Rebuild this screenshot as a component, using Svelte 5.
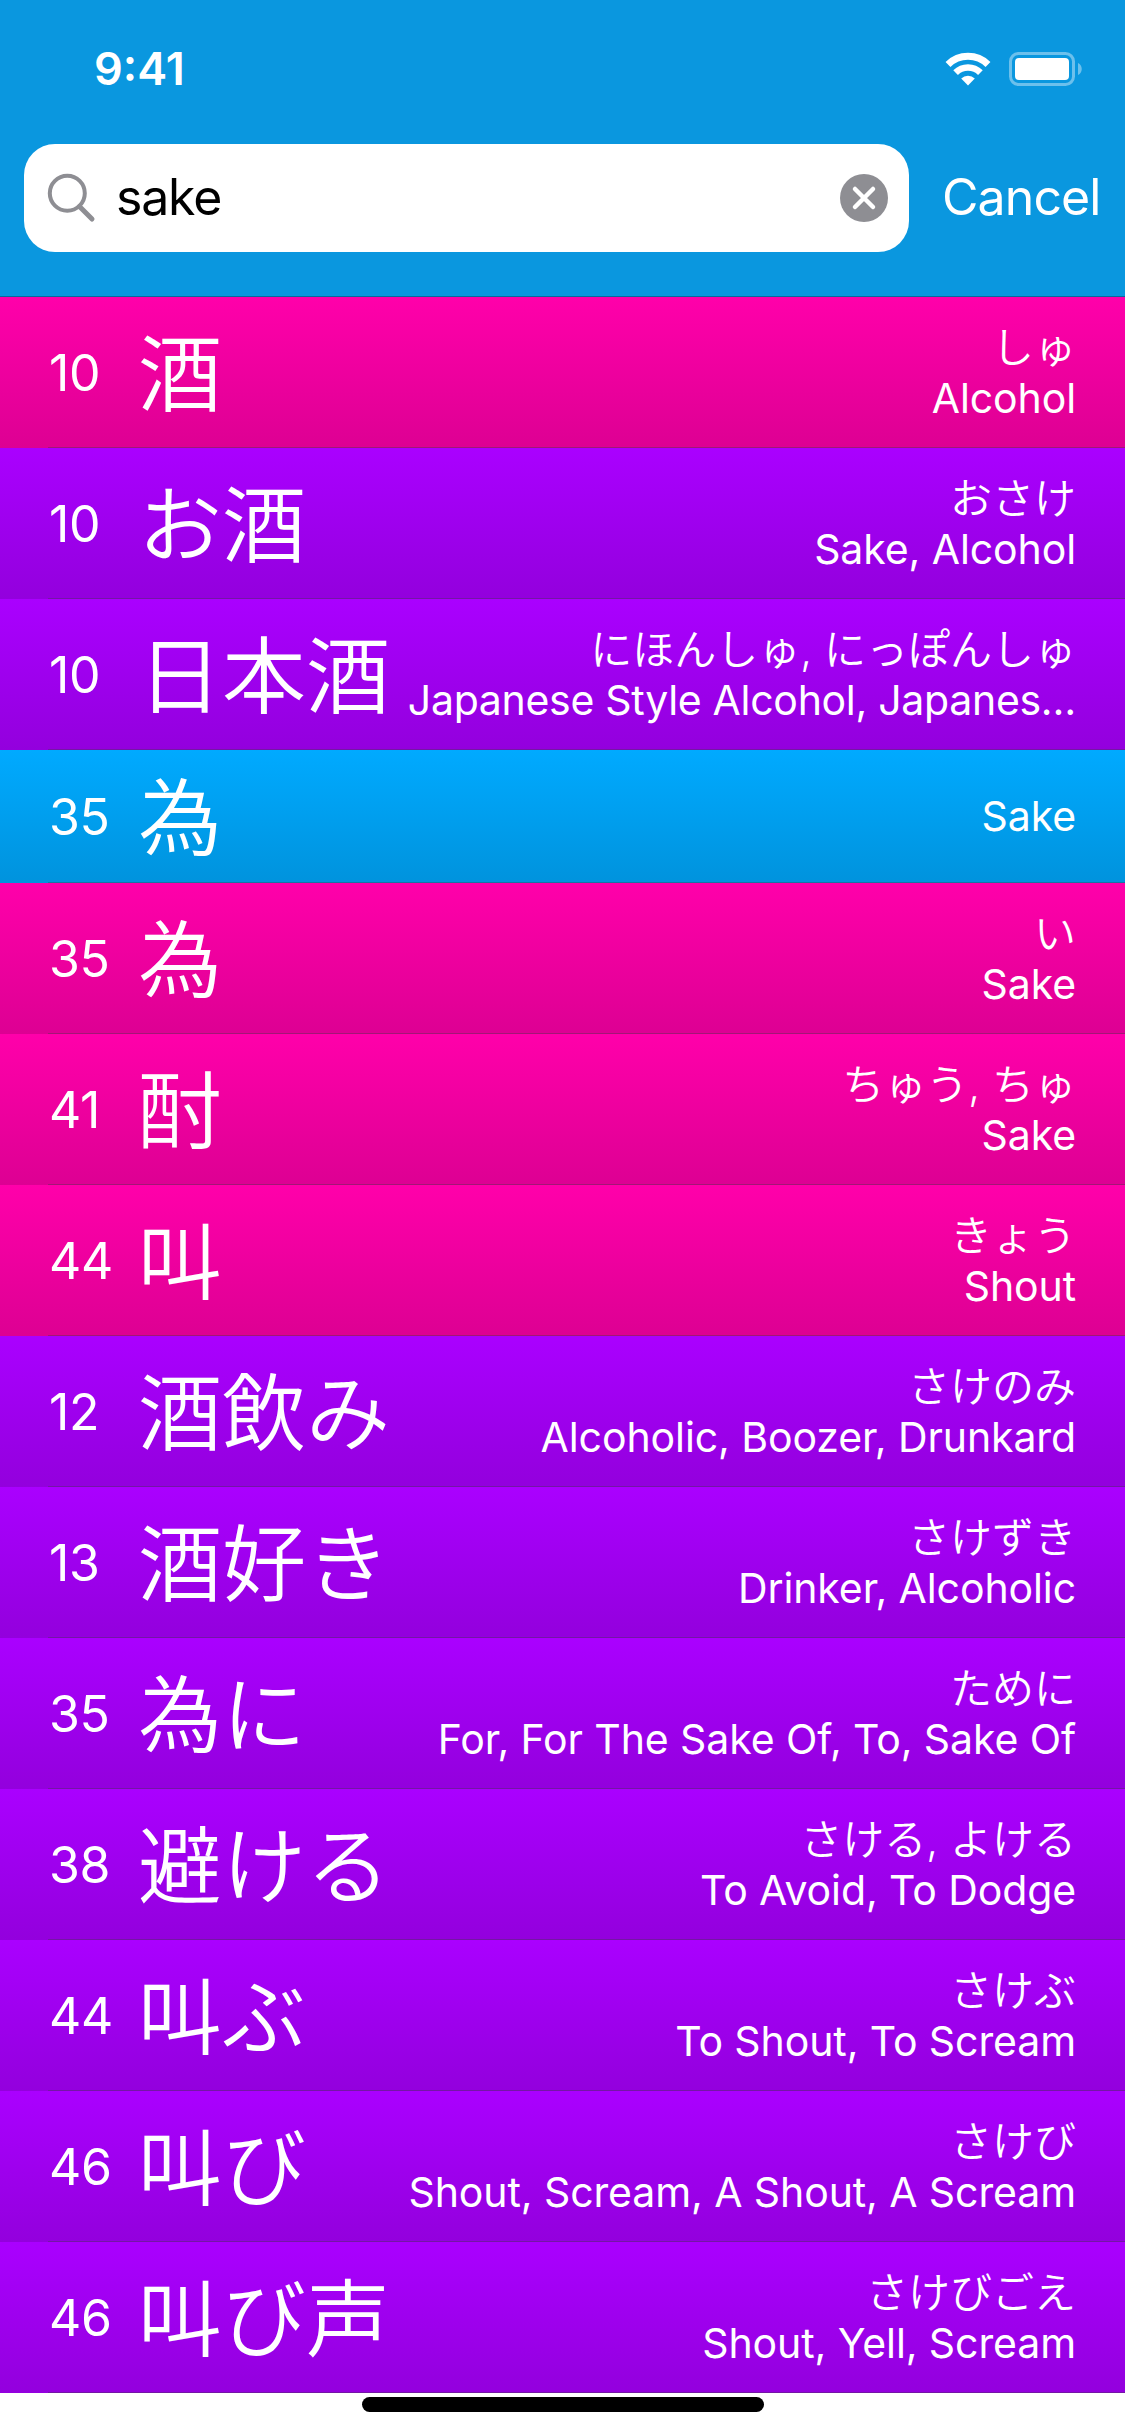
<script>
  const entries = [
    { kind: 'on', strokes: 10, word: '酒', reading: 'しゅ', meaning: 'Alcohol' },
    { kind: 'vocab', strokes: 10, word: 'お酒', reading: 'おさけ', meaning: 'Sake, Alcohol' },
    { kind: 'vocab', strokes: 10, word: '日本酒', reading: 'にほんしゅ, にっぽんしゅ', meaning: 'Japanese Style Alcohol, Japanes…', tight: true },
    { kind: 'radical', strokes: 35, word: '為', reading: '', meaning: 'Sake' },
    { kind: 'on', strokes: 35, word: '為', reading: 'い', meaning: 'Sake' },
    { kind: 'on', strokes: 41, word: '酎', reading: 'ちゅう, ちゅ', meaning: 'Sake' },
    { kind: 'on', strokes: 44, word: '叫', reading: 'きょう', meaning: 'Shout' },
    { kind: 'vocab', strokes: 12, word: '酒飲み', reading: 'さけのみ', meaning: 'Alcoholic, Boozer, Drunkard' },
    { kind: 'vocab', strokes: 13, word: '酒好き', reading: 'さけずき', meaning: 'Drinker, Alcoholic' },
    { kind: 'vocab', strokes: 35, word: '為に', reading: 'ために', meaning: 'For, For The Sake Of, To, Sake Of' },
    { kind: 'vocab', strokes: 38, word: '避ける', reading: 'さける, よける', meaning: 'To Avoid, To Dodge' },
    { kind: 'vocab', strokes: 44, word: '叫ぶ', reading: 'さけぶ', meaning: 'To Shout, To Scream' },
    { kind: 'vocab', strokes: 46, word: '叫び', reading: 'さけび', meaning: 'Shout, Scream, A Shout, A Scream' },
    { kind: 'vocab', strokes: 46, word: '叫び声', reading: 'さけびごえ', meaning: 'Shout, Yell, Scream' },
  ];
</script>

<div class="screen">
  <header>
    <div class="status">
      <span class="time">9:41</span>
      <div class="indicators">
        <svg class="wifi" width="46" height="34" viewBox="0 0 46 34">
          <g fill="none" stroke="#fff">
            <path d="M3 12.4a28.6 28.6 0 0 1 40 0" stroke-width="7" />
            <path d="M10.6 20.6a17.6 17.6 0 0 1 24.8 0" stroke-width="6.6" />
          </g>
          <path d="M23 33.4l-6.8-6.9a9.7 9.7 0 0 1 13.6 0z" fill="#fff" />
        </svg>
        <svg class="battery" width="74" height="34" viewBox="0 0 74 34">
          <rect x="1.5" y="1.5" width="63" height="31" rx="8" fill="none" stroke="#fff" stroke-opacity=".4" stroke-width="3" />
          <rect x="6" y="6" width="54" height="22" rx="4" fill="#fff" />
          <path d="M69 11c5 2 5 10 0 12z" fill="#fff" fill-opacity=".4" />
        </svg>
      </div>
    </div>
    <div class="search">
      <div class="field">
        <svg class="glass" width="50" height="50" viewBox="0 0 50 50" fill="none" stroke="#8e8e93">
          <circle cx="20.3" cy="20.3" r="17.5" stroke-width="4" />
          <path d="M32.5 33.5L45 46" stroke-width="5" stroke-linecap="round" />
        </svg>
        <span class="query">sake</span>
        <svg class="clear" width="48" height="48" viewBox="0 0 48 48">
          <circle cx="24" cy="24" r="24" fill="#8e8e93" />
          <path d="M15 15l18 18M33 15l-18 18" stroke="#fff" stroke-width="4.5" stroke-linecap="round" />
        </svg>
      </div>
      <span class="cancel">Cancel</span>
    </div>
  </header>

  <ul>
    {#each entries as entry}
      <li class={entry.kind}>
        <span class="level">{entry.strokes}</span>
        <span class="word">{entry.word}</span>
        <div class="detail">
          {#if entry.reading}<span class="reading">{entry.reading}</span>{/if}
          <span class="meaning" class:tight={entry.tight}>{entry.meaning}</span>
        </div>
      </li>
    {/each}
  </ul>

  <footer><div class="home"></div></footer>
</div>

<style>
  :global(body) {
    background: #fff;
  }
  .screen {
    width: 1125px;
    height: 2436px;
    overflow: hidden;
    display: flex;
    flex-direction: column;
    color: #fff;
    font-family: Inter, 'Noto Sans CJK JP', sans-serif;
  }
  header {
    box-sizing: border-box;
    height: 297px;
    flex: none;
    background: #0a97df;
    border-bottom: 1px solid #0a6a9c;
  }
  .status {
    height: 144px;
    box-sizing: border-box;
    padding: 52px 42px 0 94px;
    display: flex;
    justify-content: space-between;
    align-items: flex-start;
  }
  .time {
    font-size: 45px;
    line-height: 34px;
    font-weight: 600;
  }
  .indicators {
    display: flex;
    gap: 18px;
  }
  .search {
    display: flex;
    align-items: center;
    padding-left: 24px;
  }
  .field {
    box-sizing: border-box;
    width: 885px;
    height: 108px;
    border-radius: 31px;
    background: #fff;
    display: flex;
    align-items: center;
    padding: 0 21px 0 23px;
  }
  .query {
    flex: 1;
    margin-left: 19px;
    padding-bottom: 3px;
    color: #000;
    font-size: 50px;
    line-height: 60px;
    letter-spacing: -1.2px;
  }
  .cancel {
    margin-left: 33px;
    padding-bottom: 3px;
    font-size: 50px;
    line-height: 60px;
    letter-spacing: -0.9px;
  }
  ul {
    list-style: none;
    margin: 0;
    padding: 0;
    flex: none;
  }
  li {
    position: relative;
    box-sizing: border-box;
    height: 151px;
    padding: 0 49px;
    display: flex;
    align-items: center;
  }
  li::after {
    content: '';
    position: absolute;
    left: 48px;
    right: 0;
    bottom: 0;
    height: 1px;
    background: rgba(60, 60, 67, 0.36);
  }
  .on {
    background: linear-gradient(#ff00aa, #dd0093);
  }
  .vocab {
    background: linear-gradient(#aa00ff, #9300dd);
  }
  .radical {
    height: 133px;
    background: linear-gradient(#00aaff, #0093dd);
  }
  .level {
    width: 89px;
    flex: none;
    font-size: 50px;
    line-height: 60px;
    letter-spacing: -0.4px;
  }
  .word {
    flex: none;
    padding-bottom: 8px;
    font-family: 'Noto Sans CJK JP', sans-serif;
    font-size: 84px;
    line-height: 120px;
    font-weight: 350;
  }
  .detail {
    flex: 1;
    min-width: 0;
    display: flex;
    flex-direction: column;
    align-items: flex-end;
    white-space: nowrap;
    font-size: 41px;
    line-height: 51px;
  }
  .reading {
    font-size: 42px;
    font-weight: 350;
  }
  .meaning {
    letter-spacing: -0.1px;
  }
  .meaning.tight {
    letter-spacing: -0.3px;
  }
  footer {
    display: flex;
    justify-content: center;
    padding-top: 4px;
  }
  .home {
    width: 402px;
    height: 15px;
    border-radius: 8px;
    background: #000;
  }
</style>
